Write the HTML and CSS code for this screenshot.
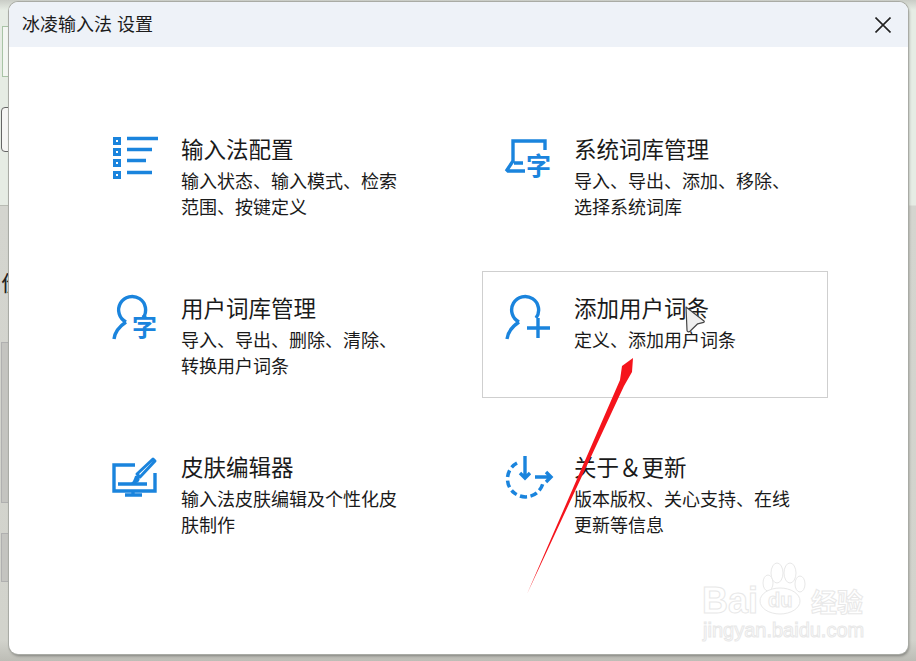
FILE: index.html
```html
<!DOCTYPE html>
<html lang="zh-CN">
<head>
    <meta charset="UTF-8">
    <meta name="viewport" content="width=device-width, initial-scale=1.0">
    <title>冰凌输入法 设置</title>
    <link rel="stylesheet" href="styles.css">
</head>
<body>
    <!-- bits of the window behind -->
    <div class="behind behind-green"></div>
    <div class="behind behind-dark"></div>
    <div class="behind behind-line"></div>
    <div class="behind behind-text">价</div>
    <div class="behind behind-box1"></div>
    <div class="behind behind-box2"></div>

    <div class="window">
        <header class="titlebar">
            <span class="title">冰凌输入法 设置</span>
            <svg class="close" viewBox="0 0 16 16"><path d="M.5.5l15 15M15.500.5l-15 15"/></svg>
        </header>

        <div class="grid">
            <div class="item">
                <svg class="icon" viewBox="0 0 48 48">
                    <path class="solid" d="M1 3h8v8H1zM1 14h8v8H1zM1 25h8v8H1zM1 37h8v8H1z"/>
                    <path class="dot" d="M4 6h2v2H4zM4 17h2v2H4zM4 28h2v2H4zM4 40h2v2H4z"/>
                    <path d="M15 4.500h31M15 15.500h25M15 26.500h19M15 38.500h25"/>
                </svg>
                <div class="text">
                    <h2>输入法配置</h2>
                    <p>输入状态、输入模式、检索范围、按键定义</p>
                </div>
            </div>

            <div class="item">
                <svg class="icon" viewBox="0 0 48 48">
                    <path d="M40 16V7H8v20l-6 9 1 1h17M9 29h9"/>
                    <text class="zi" x="21" y="41">字</text>
                </svg>
                <div class="text">
                    <h2>系统词库管理</h2>
                    <p>导入、导出、添加、移除、选择系统词库</p>
                </div>
            </div>

            <div class="item">
                <svg class="icon" viewBox="0 0 48 48">
                    <path d="M14 29A13.500 13.500 0 1 1 31 25M2 46c1-8 6-13 12-17"/>
                    <text class="zi" x="20" y="43">字</text>
                </svg>
                <div class="text">
                    <h2>用户词库管理</h2>
                    <p>导入、导出、删除、清除、转换用户词条</p>
                </div>
            </div>

            <div class="item active">
                <svg class="icon" viewBox="0 0 48 48">
                    <path d="M14 29A13.500 13.500 0 1 1 31 25M2 46c1-8 6-13 12-17M22 35h23M33 25v20"/>
                </svg>
                <div class="text">
                    <h2>添加用户词条</h2>
                    <p>定义、添加用户词条</p>
                </div>
            </div>

            <div class="item">
                <svg class="icon" viewBox="0 0 48 48">
                    <path d="M23 13H2v26h41V21M21 39v4M13 43h17M6 32h29"/>
                    <path class="brush" d="M41 7l2 2-15 16-3-3z"/>
                    <path class="solid" d="M23 24c3-1 6 2 4 5-1 2-5 3-8 2 2-1 3-4 4-7z"/>
                </svg>
                <div class="text">
                    <h2>皮肤编辑器</h2>
                    <p>输入法皮肤编辑及个性化皮肤制作</p>
                </div>
            </div>

            <div class="item">
                <svg class="icon" viewBox="0 0 48 48">
                    <path class="dashed" d="M12 11A18 18 0 1 0 38 31"/>
                    <path d="M20 4v21M15 21l5 5 5-5M30 25h15M41 20l5 5-5 5"/>
                </svg>
                <div class="text">
                    <h2>关于＆更新</h2>
                    <p>版本版权、关心支持、在线更新等信息</p>
                </div>
            </div>
        </div>
    </div>

    <!-- watermark, red arrow and mouse pointer lie over the window -->
    <svg class="overlay" viewBox="0 0 916 661">
        <g class="mark">
            <text class="mark-bai" x="702" y="613">Bai</text>
            <ellipse cx="768" cy="583" rx="5" ry="8"/>
            <ellipse cx="777" cy="573" rx="6" ry="10"/>
            <ellipse cx="790" cy="573" rx="6" ry="10"/>
            <ellipse cx="800" cy="584" rx="5" ry="8"/>
            <ellipse cx="780" cy="601" rx="20" ry="13"/>
            <text class="mark-du" x="768" y="607">du</text>
            <text class="mark-cn" x="811" y="612">经验</text>
            <text class="mark-url" x="703" y="637">jingyan.baidu.com</text>
        </g>
        <polygon class="arrow" points="527,594 620,380 622,366 633,358 632,372 624,386"/>
        <path class="pointer" d="M686 307l18 14c.5.5.3 1-.3 1.300l-6 1.500-7.700 7.500c-1.500 1-3 .5-3-1z"/>
    </svg>
</body>
</html>
```

FILE: styles.css
```css
html, body {
    margin: 0;
    height: 100%;
}

body {
    position: relative;
    width: 916px;
    height: 661px;
    overflow: hidden;
    background: linear-gradient(180deg, #c9ccc6 0, #e6ece4 10px, #e6ece4 205px, #d4d5cf 206px, #d2d3cc 640px, #bdbdb6 661px);
    font-family: "Noto Sans CJK SC", "Liberation Sans", sans-serif;
    color: #1a1a1a;
}

.behind {
    position: absolute;
    box-sizing: border-box;
}

.behind-green {
    left: 2px;
    top: 26px;
    width: 12px;
    height: 51px;
    border: 1px solid #a9c4a6;
    background: #f3f6f2;
}

.behind-dark {
    left: 1px;
    top: 107px;
    width: 12px;
    height: 45px;
    border: 1px solid #666;
    border-radius: 4px;
    background: #f6f6f4;
}

.behind-line {
    left: 0;
    top: 205px;
    width: 10px;
    height: 1px;
    background: #b9bcb4;
}

.behind-text {
    left: 1px;
    top: 266px;
    font-size: 22px;
    line-height: 30px;
    color: #222;
}

.behind-box1 {
    left: 1px;
    top: 342px;
    width: 12px;
    height: 161px;
    border: 1px solid #b0b0b0;
    background: #c4c4c0;
}

.behind-box2 {
    left: 1px;
    top: 533px;
    width: 12px;
    height: 49px;
    border: 1px solid #b0b0b0;
    background: #c4c4c0;
}

/* window */
.window {
    position: absolute;
    left: 9px;
    top: 2px;
    width: 899px;
    height: 652px;
    background: white;
    border-radius: 9px;
    overflow: hidden;
    box-shadow: 0 0 0 1px #a9aba5, 1px 2px 3px rgba(0, 0, 0, 0.35);
}

.titlebar {
    display: flex;
    align-items: center;
    justify-content: space-between;
    height: 45px;
    padding: 0 17px 0 13px;
    background: #eef2f8;
    color: #1c1c1c;
}

.title {
    margin-bottom: 3px;
    font-size: 18px;
    word-spacing: 1px;
}

.close {
    width: 16px;
    height: 16px;
}

.close path {
    fill: none;
    stroke: #222;
    stroke-width: 1.600;
}

.grid {
    display: grid;
    grid-template-columns: 346px 346px;
    grid-auto-rows: 127px;
    column-gap: 47px;
    row-gap: 32px;
    padding: 65px 0 0 80px;
}

.item {
    display: flex;
    box-sizing: border-box;
    padding: 21px 23px;
    border: 1px solid transparent;
}

.item.active {
    border-color: #cfcfcf;
}

.icon {
    flex: none;
    width: 48px;
    height: 48px;
    margin-right: 21px;
    margin-left: -1px;
    overflow: visible;
}

.icon path {
    fill: none;
    stroke: #1a84dd;
    stroke-width: 3.400;
}

.icon .solid {
    fill: #1a84dd;
    stroke: none;
}

.icon .dot {
    fill: white;
    stroke: none;
}

.icon .brush {
    stroke-width: 3;
    stroke-linejoin: round;
}

.icon .dashed {
    stroke-width: 3.500;
    stroke-dasharray: 7 3.500;
}

.zi {
    font-size: 25px;
    font-weight: 700;
    fill: #1a84dd;
}

.text {
    width: 222px;
}

.text h2 {
    margin: 0 0 5px;
    font-size: 22.500px;
    font-weight: 400;
    line-height: 29px;
    white-space: nowrap;
}

.text p {
    margin: 0;
    font-size: 18px;
    line-height: 25.500px;
}

/* things on top */
.overlay {
    position: absolute;
    left: 0;
    top: 0;
    width: 916px;
    height: 661px;
    pointer-events: none;
}

.mark ellipse,
.mark text {
    fill: white;
    stroke: #e8e8e8;
    stroke-width: 1;
}

.mark-bai {
    font-family: "Liberation Sans", sans-serif;
    font-size: 36px;
    font-weight: 700;
}

.mark-du {
    font-family: "Liberation Sans", sans-serif;
    font-size: 20px;
    font-weight: 700;
}

.mark-cn {
    font-size: 26px;
    font-weight: 700;
}

.mark-url {
    font-family: "Liberation Sans", sans-serif;
    font-size: 20px;
}

.arrow {
    fill: #f5141c;
}

.pointer {
    fill: #efefef;
    stroke: #444;
    stroke-width: 1.200;
    stroke-linejoin: round;
}
```
